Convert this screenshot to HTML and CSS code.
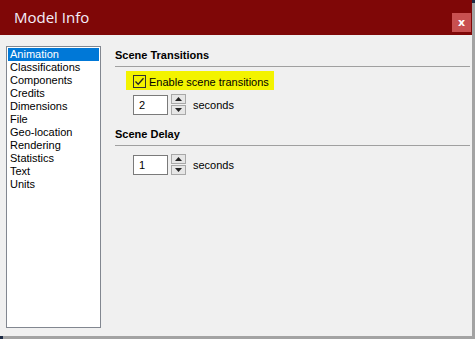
FILE: index.html
```html
<!DOCTYPE html>
<html lang="en">
<head>
    <meta charset="UTF-8">
    <title>Model Info</title>
    <link rel="stylesheet" href="styles.css">
</head>
<body>
    <div class="window">
        <div class="titlebar">
            <span class="title">Model Info</span>
            <button class="close-btn">x</button>
        </div>

        <div class="body">
            <ul class="nav-list">
                <li class="selected">Animation</li>
                <li>Classifications</li>
                <li>Components</li>
                <li>Credits</li>
                <li>Dimensions</li>
                <li>File</li>
                <li>Geo-location</li>
                <li>Rendering</li>
                <li>Statistics</li>
                <li>Text</li>
                <li>Units</li>
            </ul>

            <div class="panel">
                <h3 class="section-title">Scene Transitions</h3>
                <label class="check-row">
                    <span class="checkbox">
                        <svg width="11" height="11" viewBox="0 0 11 11"><path d="M1.5 5.5 L4.2 8.3 L9.5 2.2" fill="none" stroke="#222" stroke-width="1.3"/></svg>
                    </span>
                    <span>Enable scene transitions</span>
                </label>
                <div class="spin-row">
                    <div class="spin-input">2</div>
                    <div class="spin-buttons">
                        <span class="spin-btn"><svg width="7" height="4" viewBox="0 0 7 4"><path d="M0 4 L3.5 0 L7 4 Z" fill="#222"/></svg></span>
                        <span class="spin-btn"><svg width="7" height="4" viewBox="0 0 7 4"><path d="M0 0 L3.5 4 L7 0 Z" fill="#222"/></svg></span>
                    </div>
                    <span class="unit">seconds</span>
                </div>

                <h3 class="section-title">Scene Delay</h3>
                <div class="spin-row delay">
                    <div class="spin-input">1</div>
                    <div class="spin-buttons">
                        <span class="spin-btn"><svg width="7" height="4" viewBox="0 0 7 4"><path d="M0 4 L3.5 0 L7 4 Z" fill="#222"/></svg></span>
                        <span class="spin-btn"><svg width="7" height="4" viewBox="0 0 7 4"><path d="M0 0 L3.5 4 L7 0 Z" fill="#222"/></svg></span>
                    </div>
                    <span class="unit">seconds</span>
                </div>
            </div>
        </div>
    </div>
</body>
</html>
```

FILE: styles.css
```css
body {
    margin: 0;
    width: 475px;
    height: 339px;
    overflow: hidden;
    background: #1d2b45;
    font-family: 'Liberation Sans', Arial, sans-serif;
    font-size: 11px;
    color: #000;
}

.window {
    width: 472px;
    height: 336px;
    background: #f0f0f0;
    display: flex;
    flex-direction: column;
    box-shadow: 3px 3px 0 #a3a3a3;
}

.titlebar {
    height: 35px;
    background: #7f0707;
    display: flex;
    align-items: flex-start;
    justify-content: space-between;
    flex-shrink: 0;
}

.title {
    color: #f4eefa;
    font-family: 'Open Sans', sans-serif;
    font-size: 15px;
    margin: 7px 0 0 14px;
}

.close-btn {
    width: 19px;
    height: 19px;
    margin: 13px 1px 0 0;
    padding: 0;
    border: none;
    background: #c85050;
    color: #fff;
    font-family: 'DejaVu Sans', sans-serif;
    font-weight: bold;
    font-size: 11px;
    line-height: 17px;
}

.body {
    display: flex;
    padding: 11px 0 0 6px;
}

.nav-list {
    list-style: none;
    margin: 0;
    padding: 1px;
    width: 91px;
    height: 278px;
    background: #fff;
    border: 1px solid #828790;
}

.nav-list li {
    height: 13px;
    line-height: 13px;
    padding-left: 2px;
    white-space: nowrap;
}

.nav-list li.selected {
    background: #0078d7;
    color: #fff;
}

.panel {
    flex: 1;
    margin-left: 14px;
    margin-right: 2px;
}

.section-title {
    margin: 0;
    font-size: 11px;
    font-weight: bold;
    height: 18px;
    padding-top: 2px;
    line-height: 14px;
    border-bottom: 1px solid #a0a0a0;
}

.check-row {
    display: inline-flex;
    align-items: center;
    gap: 3px;
    margin: 4px 0 0 11px;
    padding: 4px 5px 2px 7px;
    background: #f3f300;
}

.checkbox {
    width: 11px;
    height: 11px;
    border: 1px solid #333;
    display: flex;
}

.spin-row {
    display: flex;
    align-items: center;
    margin: 4px 0 10px 18px;
}

.spin-row.delay {
    margin-top: 8px;
}

.spin-input {
    width: 28px;
    height: 18px;
    line-height: 18px;
    padding-left: 5px;
    background: #fff;
    border: 1px solid #7a7a7a;
}

.spin-buttons {
    display: flex;
    flex-direction: column;
    gap: 1px;
    margin-left: 3px;
}

.spin-btn {
    width: 13px;
    height: 8px;
    border: 1px solid #a8a8a8;
    background: #e6e6e6;
    display: flex;
    align-items: center;
    justify-content: center;
}

.unit {
    margin-left: 7px;
}
```
